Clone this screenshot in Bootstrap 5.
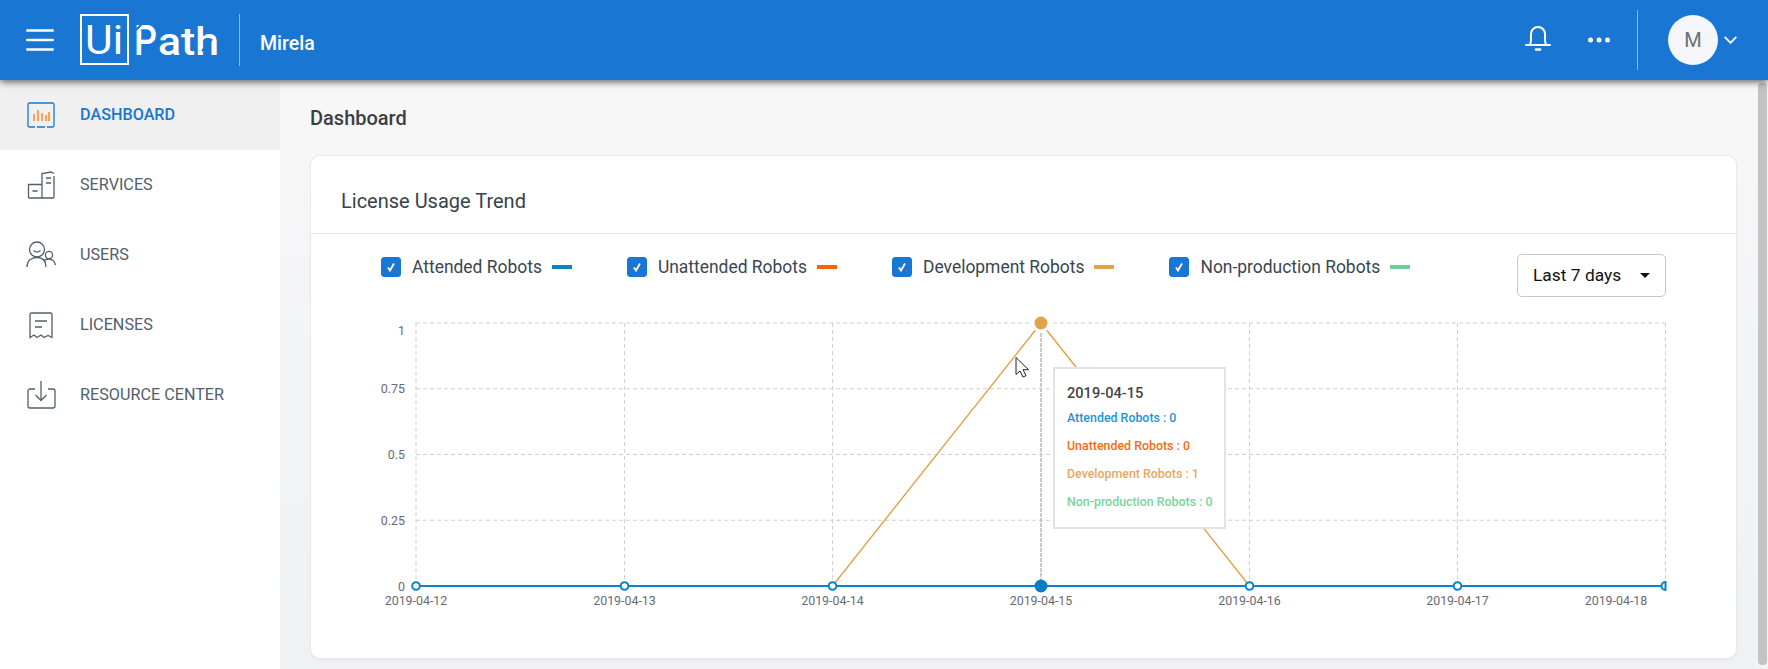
<!doctype html>
<html lang="en">
<head>
<meta charset="utf-8">
<title>Dashboard</title>
<link href="https://cdn.jsdelivr.net/npm/bootstrap@5.3.0/dist/css/bootstrap.min.css" rel="stylesheet">
<style>
html,body{height:669px;overflow:hidden}
body{font-family:Roboto,"Liberation Sans",sans-serif;background:#f5f5f7;color:#3a4650}
.top-bar{height:80px;background:#1976d2;box-shadow:0 2px 7px rgba(0,0,0,.6);position:relative;z-index:3;color:#fff;padding-left:26px}
.logo-svg{margin-left:26px;display:block}
.v-sep{width:1px;background:rgba(255,255,255,.5);align-self:center}
.sep-a{height:52px;margin-left:19px}
.sep-b{height:60px;margin-left:27px}
.org-name{font-size:19.5px;font-weight:500;margin-left:20px;margin-top:7px}
.bell-ico{margin-right:37px;margin-top:-3px}
.dots-ico{display:block}
.avatar-dot{width:50px;height:50px;border-radius:50%;background:#f5f6fa;color:#6b6f73;font-size:20px;margin-left:30px}
.chev-ico{margin:0 31px 0 6px}
.shell{height:589px}
.side-nav{width:280px;background:#fff;flex:none}
.nav-row{height:70px;padding-left:26px;font-size:16.2px;color:#526069;text-decoration:none}
.nav-row svg{width:30px;height:30px;margin-right:24px;flex:none}
.nav-row.is-on{background:#f0f0f1;color:#1976d2;font-weight:500}
.main-pane{padding:0 0 0 30px;min-width:0;background:linear-gradient(#f7f7f7,#f0f1f5)}
.page-title{height:75px;font-size:20px;font-weight:500;color:#3a3f44;margin:0;padding-top:1px}
.usage-card{width:1427px;height:504px;border:1px solid #e9e9ec;border-radius:10px;box-shadow:0 1px 2px rgba(0,0,0,.05)}
.usage-head{height:78px;padding:34px 0 0 30px;background:#fff;border-bottom:1px solid #e8e8ea;border-radius:10px 10px 0 0}
.usage-title{font-size:20px;font-weight:400;margin:0;line-height:22px;color:#37424b}
.usage-body{padding:23px 0 0 0}
.legend-row{padding-left:70px;height:53px;font-size:17.45px;color:#3a4650;padding-right:70px}
.legend-item{margin-right:55px;height:20px}
.legend-item .form-check-input{width:20px;height:20px;margin:0 11px 0 0;border-radius:3px;background-color:#1976d2;border-color:#1976d2;background-size:12px;opacity:1;flex:none;
background-image:url("data:image/svg+xml,%3csvg xmlns='http://www.w3.org/2000/svg' viewBox='0 0 12 12'%3e%3cpath fill='none' stroke='%23fff' stroke-width='1.800' d='M3 6.500l2 3 4-7'/%3e%3c/svg%3e")}
.swatch{width:20px;height:4px;margin-left:10px;flex:none}
.sw-blue{background:#0a84c6}.sw-orange{background:#fa6400}.sw-gold{background:#e0a348}.sw-green{background:#71cd97}
.range-btn{width:149px;height:43px;margin-top:-3px;border:1px solid #c8c8c8;border-radius:5px;background:#fff;color:#111;font-size:17.4px;padding:0 15px;display:flex;align-items:center;justify-content:space-between}
.range-btn::after{margin-left:0;border-top-width:.34em;border-right-width:.34em;border-left-width:.34em}
.chart-wrap{position:relative;width:1340px;height:300px;margin-left:39px}
.chart-wrap svg{display:block}
.chart-wrap text{font-family:Roboto,"Liberation Sans",sans-serif;font-size:12.4px;fill:#666b70}
.tip-box{position:absolute;left:703px;top:57px;width:173px;height:162px;background:#fff;border:2px solid #e3e3e3;padding:14px 0 0 12px;font-size:12.4px;font-weight:500;white-space:nowrap}
.tip-date{font-size:14.6px;color:#444;line-height:20px;margin-bottom:1px}
.tip-row{line-height:28px}
.t-blue{color:#1e95d6}.t-orange{color:#fa6a14}.t-gold{color:#e3aa62}.t-green{color:#7bd3a0}
.scroll-rail{width:10px;flex:none;padding-top:3px;padding-bottom:4px;background:#f3f3f4}
.scroll-thumb{height:100%;width:9px;background:#c3c3c3;border-radius:4px}
</style>
</head>
<body>
<header class="top-bar d-flex align-items-center">
  <svg width="28" height="22" viewBox="0 0 28 22" fill="none" stroke="#fff" stroke-width="2.6" stroke-linecap="round" aria-label="Menu"><path d="M1.3 1.500h25.400M1.3 11h25.400M1.3 20.500h25.400"/></svg>
  <svg class="logo-svg" width="140" height="52" viewBox="0 0 140 52" aria-label="UiPath">
    <rect x="1" y="1" width="47" height="49" fill="none" stroke="#fff" stroke-width="2"/>
    <text x="5" y="40" font-family="Roboto" font-size="41" font-weight="400" fill="#fff" textLength="38" lengthAdjust="spacingAndGlyphs">Ui</text>
    <text x="54" y="41" font-family="Roboto" font-size="42" font-weight="500" fill="#fff" textLength="23" lengthAdjust="spacingAndGlyphs">P</text>
    <text x="78" y="41" font-family="Roboto" font-size="38" font-weight="500" fill="#fff" textLength="61" lengthAdjust="spacingAndGlyphs">ath</text>
    <path d="M54 18l9-9M122 37l10-12" stroke="#1976d2" stroke-width="2" fill="none"/>
  </svg>
  <div class="v-sep sep-a"></div>
  <span class="org-name">Mirela</span>
  <div class="ms-auto d-flex align-items-center">
    <svg class="bell-ico" width="26" height="27" viewBox="0 0 26 27" fill="none" stroke="#fff" stroke-width="2" stroke-linecap="round" aria-label="Notifications"><path d="M1 20h24M4.500 20c1.300-1.500 1.500-3 1.500-5v-6a7 7 0 0 1 14 0v6c0 2 .2 3.500 1.500 5"/><path d="M11 24.500h4" stroke-width="2.600"/></svg>
    <svg class="dots-ico" width="22" height="6" viewBox="0 0 22 6" fill="#fff" aria-label="More"><circle cx="2.500" cy="3" r="2.500"/><circle cx="11" cy="3" r="2.500"/><circle cx="19.500" cy="3" r="2.500"/></svg>
    <div class="v-sep sep-b"></div>
    <div class="avatar-dot d-flex align-items-center justify-content-center">M</div>
    <svg class="chev-ico" width="13" height="8" viewBox="0 0 13 8" fill="none" stroke="#fff" stroke-width="1.800"><path d="M.7.8l5.800 6 5.800-6"/></svg>
  </div>
</header>
<div class="shell d-flex">
  <nav class="side-nav">
    <a class="nav-row is-on d-flex align-items-center" href="#">
      <svg viewBox="0 0 30 30" fill="none"><path d="M9 27H3.500A1.500 1.500 0 0 1 2 25.500V4.500A1.500 1.500 0 0 1 3.500 3h23A1.500 1.500 0 0 1 28 4.500v21a1.500 1.500 0 0 1-1.500 1.500H21M11 27h8" stroke="#1976d2" stroke-width="1.300"/><path d="M8 14v7M12 10v11M16 13v8M20 15v6M23 12v9" stroke="#fa7a1e" stroke-width="1.300"/></svg>
      DASHBOARD
    </a>
    <a class="nav-row d-flex align-items-center" href="#">
      <svg viewBox="0 0 30 30" fill="none" stroke="#526069" stroke-width="1.300"><path d="M16 28V3.500l9-1.500 3 1.500M28 6V27a1 1 0 0 1-1 1H3.500a1 1 0 0 1-1-1V14.500H16M20 8h5M20 13h5M6.500 21h5"/></svg>
      SERVICES
    </a>
    <a class="nav-row d-flex align-items-center" href="#">
      <svg viewBox="0 0 30 30" fill="none" stroke="#526069" stroke-width="1.300"><circle cx="11" cy="9.500" r="7.500"/><path d="M7.500 10.500c2 2 5 2 7 0M1 27c0-6 4-9.500 10-9.500S20 21 20 27"/><circle cx="23" cy="15" r="3.600"/><path d="M17.500 21c1.500-1.500 3.500-2 5.500-2 3.500 0 6 3 6.500 6"/></svg>
      USERS
    </a>
    <a class="nav-row d-flex align-items-center" href="#">
      <svg viewBox="0 0 30 30" fill="none" stroke="#526069" stroke-width="1.300"><path d="M4 27.500V4.500A1.500 1.500 0 0 1 5.500 3h19A1.500 1.500 0 0 1 26 4.500v23l-4-2-4 2-3-2.500-4 2.500-3-2.500z"/><path d="M9 11h12M9 17h7"/></svg>
      LICENSES
    </a>
    <a class="nav-row d-flex align-items-center" href="#">
      <svg viewBox="0 0 30 30" fill="none" stroke="#526069" stroke-width="1.300"><path d="M9 9H4a2 2 0 0 0-2 2v15a2 2 0 0 0 2 2h23a2 2 0 0 0 2-2V11a2 2 0 0 0-2-2h-5"/><path d="M15 1v19M9.500 15l5.500 5.500 5.500-5.500"/></svg>
      RESOURCE CENTER
    </a>
  </nav>
  <main class="main-pane flex-grow-1">
    <h1 class="page-title d-flex align-items-center">Dashboard</h1>
    <section class="usage-card card">
      <div class="usage-head"><h2 class="usage-title">License Usage Trend</h2></div>
      <div class="usage-body">
        <div class="legend-row d-flex align-items-start">
          <label class="legend-item d-flex align-items-center"><input class="form-check-input" type="checkbox" checked>Attended Robots<span class="swatch sw-blue"></span></label>
          <label class="legend-item d-flex align-items-center"><input class="form-check-input" type="checkbox" checked>Unattended Robots<span class="swatch sw-orange"></span></label>
          <label class="legend-item d-flex align-items-center"><input class="form-check-input" type="checkbox" checked>Development Robots<span class="swatch sw-gold"></span></label>
          <label class="legend-item d-flex align-items-center"><input class="form-check-input" type="checkbox" checked>Non-production Robots<span class="swatch sw-green"></span></label>
          <div class="dropdown ms-auto"><button class="range-btn dropdown-toggle" type="button" data-bs-toggle="dropdown">Last 7 days</button></div>
        </div>
        <div class="chart-wrap">
          <svg width="1340" height="300" viewBox="350 310 1340 300">
            <g fill="none" stroke="#cfcfcf" stroke-width="1" stroke-dasharray="4 3">
              <path d="M416 323H1665.500M416 388.750H1665.500M416 454.500H1665.500M416 520.250H1665.500"/>
              <path d="M416 323V586M624.500 323V586M1249.500 323V586M832.500 323V586M1457.500 323V586M1665.500 323V586"/>
            </g>
            <path d="M1041 323V586" stroke="#c9c9c9" stroke-width="2" stroke-dasharray="4 1"/>
            <g text-anchor="end">
              <text x="405" y="335">1</text><text x="405" y="393">0.75</text><text x="405" y="459">0.5</text><text x="405" y="525">0.25</text><text x="405" y="591">0</text>
            </g>
            <g text-anchor="middle">
              <text x="416" y="605">2019-04-12</text><text x="624.500" y="605">2019-04-13</text><text x="832.500" y="605">2019-04-14</text><text x="1041" y="605">2019-04-15</text><text x="1249.500" y="605">2019-04-16</text><text x="1457.500" y="605">2019-04-17</text><text x="1616" y="605">2019-04-18</text>
            </g>
            <path d="M832.500 586L1041 323 1249.500 586" fill="none" stroke="#e0a348" stroke-width="1.400"/>
            <path d="M416 586H1665.500" stroke="#0a84c6" stroke-width="2"/>
            <g fill="#fff" stroke="#0a84c6" stroke-width="2">
              <circle cx="416" cy="586" r="3.800"/><circle cx="624.500" cy="586" r="3.800"/><circle cx="832.500" cy="586" r="3.800"/><circle cx="1249.500" cy="586" r="3.800"/><circle cx="1457.500" cy="586" r="3.800"/>
              <path d="M1665.500 582a4 4 0 0 0 0 8z"/>
            </g>
            <circle cx="1041" cy="586" r="6.500" fill="#0a7cc4"/>
            <circle cx="1041" cy="323" r="8" fill="#e0a348" stroke="#fff" stroke-width="3"/>
            <path d="M1016 357.500v17l4-3.500 3 6 3-1.300-3-6h5.500z" fill="#fff" stroke="#222" stroke-width="1"/>
          </svg>
          <div class="tip-box">
            <div class="tip-date">2019-04-15</div>
            <div class="tip-row t-blue">Attended Robots : 0</div>
            <div class="tip-row t-orange">Unattended Robots : 0</div>
            <div class="tip-row t-gold">Development Robots : 1</div>
            <div class="tip-row t-green">Non-production Robots : 0</div>
          </div>
        </div>
      </div>
    </section>
  </main>
  <div class="scroll-rail"><div class="scroll-thumb"></div></div>
</div>
<script src="https://cdn.jsdelivr.net/npm/bootstrap@5.3.0/dist/js/bootstrap.bundle.min.js"></script>
</body>
</html>
